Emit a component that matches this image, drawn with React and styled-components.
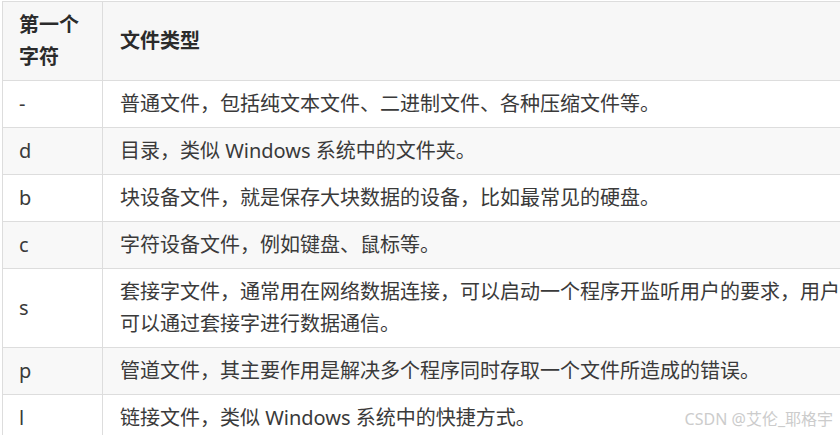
import React from "react";
import styled, { createGlobalStyle } from "styled-components";

const Global = createGlobalStyle`
  html, body {
    margin: 0;
    padding: 0;
    overflow: hidden;
    background: #ffffff;
  }
  body {
    font-family: "Noto Sans", "Noto Sans CJK SC", sans-serif;
  }
`;

const Page = styled.div`
  position: relative;
  width: 840px;
  height: 435px;
  padding: 1px 0 0 2px;
  box-sizing: border-box;
  overflow: hidden;
`;

const Table = styled.table`
  border-collapse: collapse;
  table-layout: fixed;
  width: 860px;
  font-size: 20px;
  line-height: 32px;
  color: #3a3a3a;
`;

const Col = styled.col`
  width: ${(p) => p.$w}px;
`;

const Row = styled.tr`
  background: ${(p) => (p.$shade ? "#f8f8f8" : "#ffffff")};
`;

const Head = styled.th`
  border: 1px solid #dddddd;
  padding: 7px 16px 7px ${(p) => p.$pl}px;
  text-align: left;
  vertical-align: middle;
  font-weight: 700;
  color: #2b2b2b;
  background: #f7f7f7;
`;

const Cell = styled.td`
  border: 1px solid #dddddd;
  padding: 7px 16px 7px ${(p) => p.$pl}px;
  text-align: left;
  vertical-align: middle;
`;

const Mark = styled.div`
  position: absolute;
  right: 7px;
  bottom: 6px;
  font-size: 16px;
  line-height: 20px;
  color: #cccccc;
  font-family: "Noto Sans", "Noto Sans CJK SC", sans-serif;
`;

const rows = [
  ["-", "普通文件，包括纯文本文件、二进制文件、各种压缩文件等。"],
  ["d", "目录，类似 Windows 系统中的文件夹。"],
  ["b", "块设备文件，就是保存大块数据的设备，比如最常见的硬盘。"],
  ["c", "字符设备文件，例如键盘、鼠标等。"],
  ["s", "套接字文件，通常用在网络数据连接，可以启动一个程序开监听用户的要求，用户可以通过套接字进行数据通信。"],
  ["p", "管道文件，其主要作用是解决多个程序同时存取一个文件所造成的错误。"],
  ["l", "链接文件，类似 Windows 系统中的快捷方式。"],
];

export default function App() {
  return (
    <>
      <Global />
      <Page>
        <Table>
          <colgroup>
            <Col $w={100} />
            <Col $w={760} />
          </colgroup>
          <thead>
            <tr>
              <Head $pl={16}>第一个字符</Head>
              <Head $pl={17}>文件类型</Head>
            </tr>
          </thead>
          <tbody>
            {rows.map(([c, d], i) => (
              <Row key={c} $shade={i % 2 === 1}>
                <Cell $pl={16}>{c}</Cell>
                <Cell $pl={17}>{d}</Cell>
              </Row>
            ))}
          </tbody>
        </Table>
        <Mark>CSDN @艾伦_耶格宇</Mark>
      </Page>
    </>
  );
}
